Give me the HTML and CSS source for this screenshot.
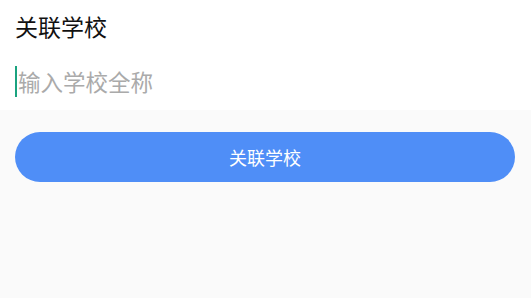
FILE: index.html
```html
<!DOCTYPE html>
<html lang="zh">
<head>
<meta charset="utf-8">
<link rel="stylesheet" href="styles.css">
</head>
<body>
<div class="top">
  <div class="title">关联学校</div>
  <div class="field"><span class="cursor"></span><span class="placeholder">输入学校全称</span></div>
</div>
<div class="actions">
  <div class="btn">关联学校</div>
</div>
</body>
</html>
```
FILE: styles.css
```css
html, body {
  margin: 0;
  padding: 0;
  background: #fafafa;
  font-family: "Noto Sans CJK SC", "Noto Sans", sans-serif;
}
.top {
  background: #ffffff;
  height: 110px;
  padding: 0 15px;
  box-sizing: border-box;
  display: flex;
  flex-direction: column;
}
.title {
  font-size: 23px;
  line-height: 26px;
  color: #111;
  margin-top: 13px;
}
.field {
  display: flex;
  align-items: center;
  margin-top: 27px;
  height: 30px;
}
.cursor {
  width: 2px;
  height: 31px;
  background: #1aa37f;
  margin-right: 1px;
}
.placeholder {
  font-size: 22.5px;
  color: #aaaaaa;
  line-height: 30px;
}
.actions {
  padding: 22px 16px 0 15px;
}
.btn {
  height: 50px;
  border-radius: 25px;
  background: #4f8ef7;
  color: #fff;
  font-size: 18px;
  display: flex;
  align-items: center;
  justify-content: center;
}
```
